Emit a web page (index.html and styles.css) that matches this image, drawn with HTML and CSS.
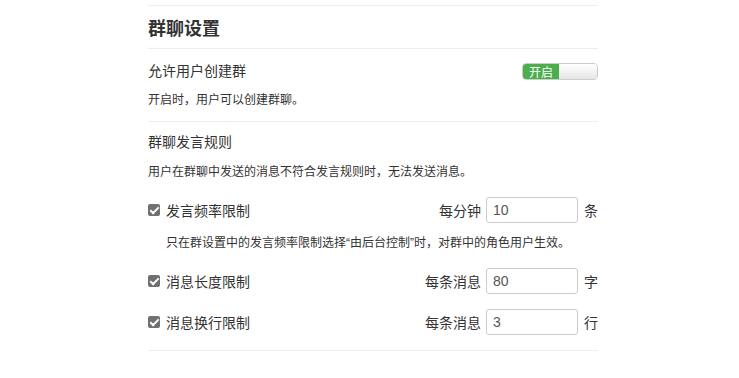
FILE: index.html
```html
<!DOCTYPE html>
<html lang="zh-CN">
<head>
    <meta charset="UTF-8">
    <title>群聊设置</title>
    <link rel="stylesheet" href="styles.css">
</head>
<body>
    <div class="panel">
        <h2 class="panel-title">群聊设置</h2>

        <div class="section">
            <div class="row">
                <span class="row-label">允许用户创建群</span>
                <span class="switch"><span class="switch-on">开启</span><span class="switch-off"></span></span>
            </div>
            <p class="desc">开启时，用户可以创建群聊。</p>
        </div>

        <div class="section section-rules">
            <div class="sub-title">群聊发言规则</div>
            <p class="desc desc-rules">用户在群聊中发送的消息不符合发言规则时，无法发送消息。</p>

            <div class="rule">
                <label class="check"><span class="box"></span>发言频率限制</label>
                <div class="limit">
                    <span>每分钟</span>
                    <input type="text" value="10">
                    <span class="unit">条</span>
                </div>
            </div>
            <p class="hint">只在群设置中的发言频率限制选择<span class="q">“</span>由后台控制<span class="q">”</span>时，对群中的角色用户生效。</p>

            <div class="rule">
                <label class="check"><span class="box"></span>消息长度限制</label>
                <div class="limit">
                    <span>每条消息</span>
                    <input type="text" value="80">
                    <span class="unit">字</span>
                </div>
            </div>

            <div class="rule rule-last">
                <label class="check"><span class="box"></span>消息换行限制</label>
                <div class="limit">
                    <span>每条消息</span>
                    <input type="text" value="3">
                    <span class="unit">行</span>
                </div>
            </div>
        </div>
    </div>
</body>
</html>
```

FILE: styles.css
```css
body {
    margin: 0;
    padding-top: 5px;
    background-color: #fff;
    font-family: 'Noto Sans CJK SC', 'Liberation Sans', sans-serif;
    color: #333;
}
.panel {
    width: 450px;
    margin-left: 148px;
    border-top: 1px solid #eee;
}
.panel-title {
    margin: 0;
    height: 42px;
    line-height: 42px;
    font-size: 18px;
    font-weight: bold;
    border-bottom: 1px solid #eee;
}
.section {
    padding: 11px 0 13px;
    border-bottom: 1px solid #eee;
}
.row {
    display: flex;
    justify-content: space-between;
    align-items: center;
    height: 20px;
}
.row-label, .sub-title {
    font-size: 14px;
    line-height: 20px;
}
.switch {
    display: flex;
    width: 74px;
    height: 15px;
    margin-top: 2px;
    border: 1px solid #ccc;
    border-radius: 4px;
    overflow: hidden;
}
.switch-on {
    width: 36px;
    background-color: #4cae4c;
    color: #fff;
    font-size: 12px;
    line-height: 15px;
    text-align: center;
}
.switch-off {
    flex: 1;
    background: linear-gradient(#fff, #e6e6e6);
}
.desc {
    margin: 10px 0 0;
    font-size: 12px;
    line-height: 18px;
}
.section-rules {
    padding: 9px 0 15px;
}
.desc-rules {
    margin-top: 11px;
}
.rule {
    display: flex;
    justify-content: space-between;
    align-items: center;
    height: 26px;
    margin-top: 17px;
}
.rule-last {
    margin-top: 15px;
}
.check {
    display: flex;
    align-items: center;
    font-size: 14px;
}
.box {
    position: relative;
    width: 12px;
    height: 12px;
    margin-right: 6px;
    border-radius: 2px;
    background-color: #707070;
}
.box::after {
    content: '';
    position: absolute;
    left: 4px;
    top: 1px;
    width: 3px;
    height: 7px;
    border: solid #fff;
    border-width: 0 2px 2px 0;
    transform: rotate(45deg);
}
.limit {
    display: flex;
    align-items: center;
    font-size: 14px;
}
.limit input {
    width: 92px;
    height: 26px;
    box-sizing: border-box;
    margin-left: 5px;
    padding: 0 6px;
    border: 1px solid #ccc;
    border-radius: 3px;
    font-family: 'Liberation Sans', sans-serif;
    font-size: 14px;
    color: #555;
}
.unit {
    margin-left: 6px;
}
.hint {
    height: 18px;
    margin: 10px 0 0;
    padding-left: 18px;
    font-size: 12px;
    line-height: 18px;
}
.hint .q {
    font-family: 'Liberation Sans', sans-serif;
}
```
